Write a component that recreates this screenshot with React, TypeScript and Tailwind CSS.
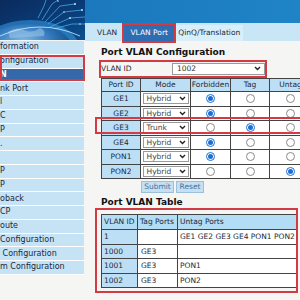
import React from "react";

const font = "font-['DejaVu_Sans',Verdana,sans-serif]";

const sideRows = [
  "formation",
  "onfiguration",
  "N",
  "nk Port",
  "l",
  "C",
  "P",
  ".",
  "",
  "P",
  "P",
  "oback",
  "CP",
  "oute",
  "Configuration",
  " Configuration",
  "m Configuration",
];

const ports = [
  { id: "GE1", mode: "Hybrid", sel: 0 },
  { id: "GE2", mode: "Hybrid", sel: 0 },
  { id: "GE3", mode: "Trunk", sel: 1 },
  { id: "GE4", mode: "Hybrid", sel: 0 },
  { id: "PON1", mode: "Hybrid", sel: 0 },
  { id: "PON2", mode: "Hybrid", sel: 2 },
];

const vlans = [
  { id: "1", tag: "", untag: "GE1 GE2 GE3 GE4 PON1 PON2" },
  { id: "1000", tag: "GE3", untag: "" },
  { id: "1001", tag: "GE3", untag: "PON1" },
  { id: "1002", tag: "GE3", untag: "PON2" },
];

function Chevron() {
  return (
    <svg width="7" height="5" viewBox="0 0 7 5" className="shrink-0">
      <path d="M1 1 L3.5 3.5 L6 1" stroke="#222" strokeWidth="1.4" fill="none" />
    </svg>
  );
}

function Radio({ on }: { on: boolean }) {
  return (
    <span
      className={
        "inline-flex items-center justify-center w-[9px] h-[9px] rounded-full border bg-white " +
        (on ? "border-[#1a6fd6]" : "border-[#8a8a8a]")
      }
    >
      {on && <span className="w-[5px] h-[5px] rounded-full bg-[#1a6fd6]" />}
    </span>
  );
}

function Globe() {
  return (
    <svg width="85" height="40" viewBox="0 0 85 40" className="shrink-0">
      <defs>
        <linearGradient id="sky" x1="0" y1="0" x2="1" y2="1">
          <stop offset="0" stopColor="#0b2a5c" />
          <stop offset="0.6" stopColor="#0a3d7a" />
          <stop offset="1" stopColor="#0c4f8f" />
        </linearGradient>
        <radialGradient id="earth" cx="0.45" cy="0.35" r="0.7">
          <stop offset="0" stopColor="#7fb8e6" />
          <stop offset="0.5" stopColor="#2d73b8" />
          <stop offset="1" stopColor="#0c3566" />
        </radialGradient>
      </defs>
      <rect width="85" height="40" fill="url(#sky)" />
      <g stroke="#5fd0ff" strokeWidth="0.7" opacity="0.85">
        <path d="M45 22 L60 6 L75 4" fill="none" />
        <path d="M48 24 L64 12 L82 10" fill="none" />
        <path d="M50 27 L70 18 L85 17" fill="none" />
        <path d="M42 20 L52 4 L58 0" fill="none" />
        <path d="M53 29 L72 24 L85 24" fill="none" />
        <path d="M38 18 L44 6 L46 0" fill="none" />
      </g>
      <g fill="#b9ecff">
        <circle cx="75" cy="4" r="1" />
        <circle cx="82" cy="10" r="1" />
        <circle cx="58" cy="1" r="0.8" />
        <circle cx="70" cy="18" r="0.9" />
        <circle cx="64" cy="12" r="0.8" />
        <circle cx="80" cy="24" r="0.8" />
      </g>
      <ellipse cx="30" cy="46" rx="48" ry="26" fill="#3aa8f0" opacity="0.5" />
      <ellipse cx="28" cy="48" rx="44" ry="24" fill="url(#earth)" />
      <path d="M8 32 Q16 26 24 30 T40 28 Q46 30 44 36 L10 38 Z" fill="#9fc9ea" opacity="0.55" />
      <path d="M0 36 Q40 18 80 36" stroke="#c8f2ff" strokeWidth="1" fill="none" opacity="0.8" />
    </svg>
  );
}

export default function App() {
  return (
    <div className={`relative w-[300px] h-[300px] overflow-hidden flex bg-[#f5f5f3] text-[7.5px] ${font}`}>
      {/* sidebar */}
      <div className="w-[85px] shrink-0 flex flex-col bg-[#f5f5f3]">
        <Globe />
        <div className="flex flex-col w-[84px] mt-[1px]">
          {sideRows.map((t, i) => {
            const active = i === 2;
            return (
              <div
                key={i}
                className={
                  "h-[13.75px] shrink-0 border-b border-white flex items-center whitespace-pre overflow-hidden text-[8px] " +
                  (active ? "bg-[#3468a8] text-white font-bold" : "bg-[#c6e2f5] text-[#1c2a3a]")
                }
              >
                {t}
              </div>
            );
          })}
        </div>
      </div>

      {/* main */}
      <div className="flex-1 flex flex-col min-w-0 relative">
        <div className="h-[23px] shrink-0 bg-gradient-to-r from-[#1b78bd] to-[#1f84c6]" />
        <div className="h-[18px] shrink-0 bg-[#c9e6f7] flex items-end pl-[12px] gap-[7px] text-[7.5px]">
          <div className="h-[16px] flex items-center text-[#1c2a3a]">VLAN</div>
          <div className="h-[16px] w-[50px] flex items-center justify-center bg-[#2f6db3] text-white">VLAN Port</div>
          <div className="h-[16px] pl-[2px] flex items-center bg-[#d8eef9] text-[#1c2a3a] w-[67px] -ml-[5px]">
            QinQ/Translation
          </div>
        </div>

        <div className="pl-[16px] pt-[5px] flex flex-col shrink-0">
          <div className="font-bold text-[9px] text-[#111] leading-[12px]">Port VLAN Configuration</div>
          <div className="h-[17px] mt-[2px] flex items-center">
            <span className="w-[71px] text-[#1c2a3a]">VLAN ID</span>
            <div className="w-[93px] h-[12px] border border-[#9a9a9a] bg-white flex items-center justify-between pl-[4px] pr-[3px] text-[#333]">
              <span>1002</span>
              <Chevron />
            </div>
          </div>

          <table className="border-collapse border border-[#444] mt-[1px] w-[210px] table-fixed text-center">
            <colgroup>
              <col className="w-[39px]" />
              <col className="w-[50px]" />
              <col className="w-[40px]" />
              <col className="w-[39px]" />
              <col className="w-[42px]" />
            </colgroup>
            <thead>
              <tr className="h-[13px] bg-[#bcdff5] text-[#1c2a3a]">
                <th className="border border-[#444] font-normal p-0 whitespace-nowrap">Port ID</th>
                <th className="border border-[#444] font-normal p-0">Mode</th>
                <th className="border border-[#444] font-normal p-0">Forbidden</th>
                <th className="border border-[#444] font-normal p-0">Tag</th>
                <th className="border border-[#444] font-normal p-0">Untag</th>
              </tr>
            </thead>
            <tbody>
              {ports.map((p) => (
                <tr key={p.id} className="h-[14.5px]">
                  <td className="border border-[#444] bg-[#bcdff5] p-0 text-[#1c2a3a]">{p.id}</td>
                  <td className="border border-[#444] bg-white p-0">
                    <div className="mx-auto w-[46px] h-[11px] border border-[#9a9a9a] flex items-center justify-between pl-[3px] pr-[2px] text-[#444] bg-white">
                      <span>{p.mode}</span>
                      <Chevron />
                    </div>
                  </td>
                  {[0, 1, 2].map((c) => (
                    <td key={c} className="border border-[#444] bg-white p-0 leading-[0]">
                      <Radio on={p.sel === c} />
                    </td>
                  ))}
                </tr>
              ))}
            </tbody>
          </table>

          <div className="flex gap-[2px] ml-[40px] mt-[2px]">
            <div className="w-[33px] h-[12px] bg-[#c4e0f3] border border-[#9cc0dc] text-[#4a6f98] flex items-center justify-center">
              Submit
            </div>
            <div className="w-[28px] h-[12px] bg-[#c4e0f3] border border-[#9cc0dc] text-[#4a6f98] flex items-center justify-center">
              Reset
            </div>
          </div>

          <div className="font-bold text-[9px] text-[#111] leading-[12px] mt-[3px]">Port VLAN Table</div>

          <div className="relative -ml-[6px] w-[203px] pt-[6px] pl-[6px] pb-[5px]">
            <span className="absolute inset-0 border-2 border-[#d23a44]" />
            <table className="border-collapse border border-[#444] w-[195px] table-fixed text-left text-[#1c2a3a] whitespace-nowrap">
              <colgroup>
                <col className="w-[36px]" />
                <col className="w-[40px]" />
                <col className="w-[119px]" />
              </colgroup>
              <thead>
                <tr className="h-[15px] bg-[#b3dcf5]">
                  <th className="border border-[#444] font-normal px-[2px] py-0">VLAN ID</th>
                  <th className="border border-[#444] font-normal px-[2px] py-0">Tag Ports</th>
                  <th className="border border-[#444] font-normal px-[2px] py-0">Untag Ports</th>
                </tr>
              </thead>
              <tbody>
                {vlans.map((v) => (
                  <tr key={v.id} className="h-[14.5px]">
                    <td className="border border-[#444] bg-[#bcdff5] px-[2px] py-0">{v.id}</td>
                    <td className="border border-[#444] bg-white px-[3px] py-0">{v.tag}</td>
                    <td className="border border-[#444] bg-white px-[2px] py-0">{v.untag}</td>
                  </tr>
                ))}
              </tbody>
            </table>
          </div>
        </div>

        {/* highlight overlays */}
        <span className="absolute left-[37px] top-[23px] w-[54px] h-[20px] border-2 border-[#d23a44]" />
        <span className="absolute left-[14px] top-[60px] w-[168px] h-[18px] border-2 border-[#d23a44]" />
        <span className="absolute left-[10px] top-[117px] w-[220px] h-[17px] border-2 border-[#d23a44]" />
      </div>

      <span className="absolute left-0 top-[55px] w-[85px] h-[26px] border-2 border-[#d23a44]" />
    </div>
  );
}
